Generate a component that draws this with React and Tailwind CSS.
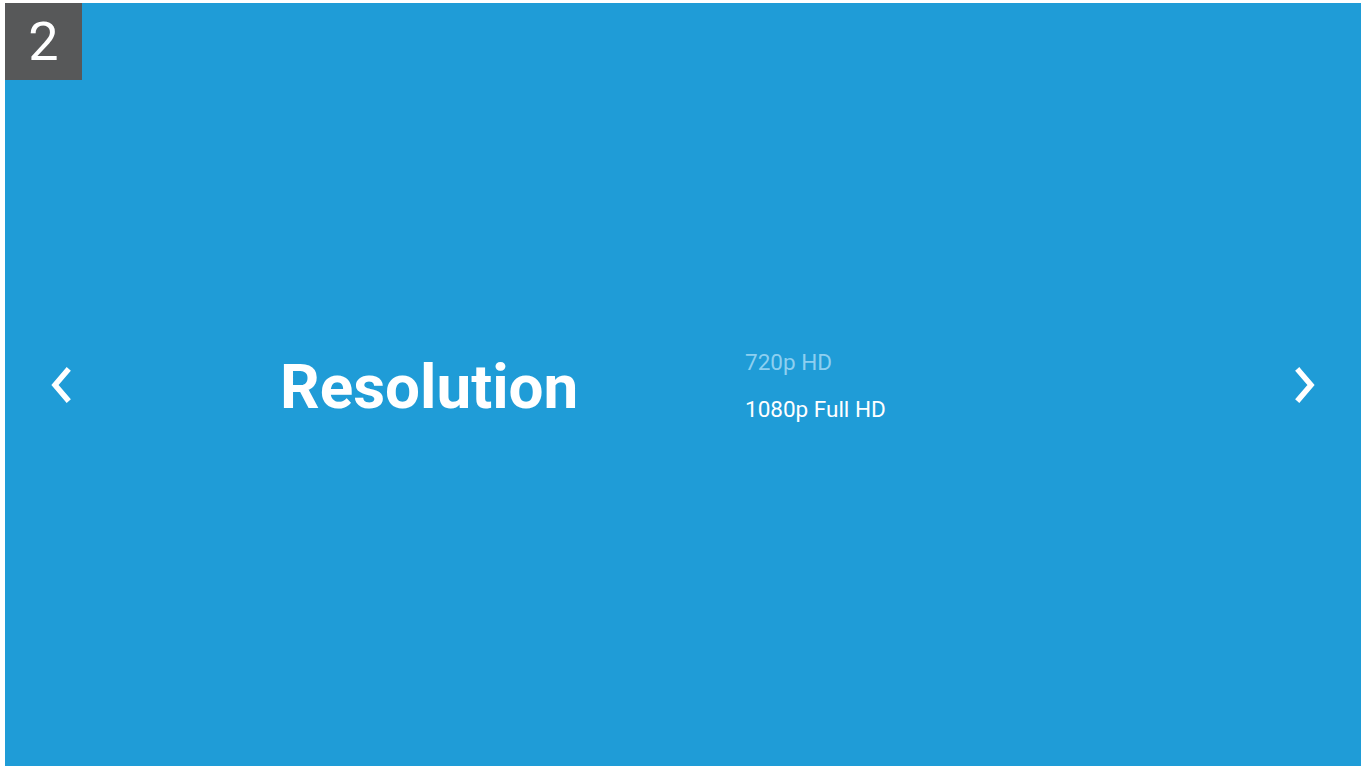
export default function App() {
  return (
    <div className="w-[1363px] h-[770px] bg-white pt-[3px] pl-[5px] pr-[2px] pb-[4px]" style={{ fontFamily: 'Roboto, "Liberation Sans", sans-serif' }}>
      <div className="relative w-full h-full bg-[#1f9cd7] flex items-center">
        <div className="absolute left-0 top-0 w-[77px] h-[77px] bg-[#575859] flex items-center justify-center text-white text-[54px] leading-none">2</div>
        <div className="w-[110px] flex justify-center pl-[2px]">
          <svg width="28" height="38" viewBox="0 0 28 38" fill="none" stroke="white" strokeWidth="5.5" strokeLinecap="square">
            <path d="M20 5 L8 19 L20 33" />
          </svg>
        </div>
        <div className="w-[630px] pl-[165px] text-white font-bold text-[62px] leading-none pt-[4px]">Resolution</div>
        <div className="flex-1 flex flex-col gap-[23px] text-[22.5px] leading-[24px] pt-[2px]">
          <div className="text-[#8dcff0]">720p HD</div>
          <div className="text-white">1080p Full HD</div>
        </div>
        <div className="w-[110px] flex justify-center pr-[2px]">
          <svg width="28" height="38" viewBox="0 0 28 38" fill="none" stroke="white" strokeWidth="5.5" strokeLinecap="square">
            <path d="M8 5 L20 19 L8 33" />
          </svg>
        </div>
      </div>
    </div>
  );
}
